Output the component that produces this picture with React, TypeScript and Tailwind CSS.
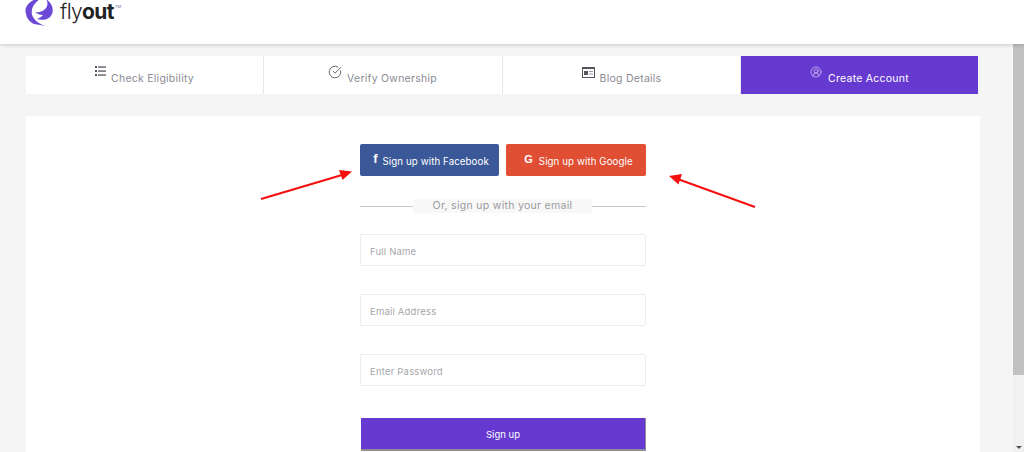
import { CircleCheckBig, CircleUserRound } from "lucide-react";

function ListIcon() {
  return (
    <svg width="11" height="10" viewBox="0 0 11 10" className="-mt-[8px] fill-[#55555c]">
      <rect x="0" y="0" width="2" height="2" />
      <rect x="3" y="0.4" width="8" height="1.3" />
      <rect x="0" y="4" width="2" height="2" />
      <rect x="3" y="4.4" width="8" height="1.3" />
      <rect x="0" y="8" width="2" height="2" />
      <rect x="3" y="8.4" width="8" height="1.3" />
    </svg>
  );
}

function BlogIcon() {
  return (
    <svg width="13" height="11" viewBox="0 0 13 11" className="-mt-[6px]">
      <rect x="0.5" y="0.5" width="12" height="10" fill="#ffffff" stroke="#55555c" />
      <rect x="0" y="0" width="13" height="2" fill="#55555c" />
      <rect x="2" y="4" width="4" height="4" fill="#55555c" />
      <rect x="7" y="4" width="4" height="1" fill="#9a9a9f" />
      <rect x="7" y="6.5" width="4" height="1" fill="#9a9a9f" />
    </svg>
  );
}

function CheckIcon() {
  return <CircleCheckBig size={14} strokeWidth={1.5} className="-mt-[7px] -ml-[1px] text-[#55555c]" />;
}

const tabs = [
  { label: "Check Eligibility", icon: <ListIcon /> },
  { label: "Verify Ownership", icon: <CheckIcon /> },
  { label: "Blog Details", icon: <BlogIcon /> },
];

const fields = ["Full Name", "Email Address", "Enter Password"];

function Logo() {
  return (
    <div className="flex items-start pl-[25px]">
      <svg width="29" height="26" viewBox="0 0 29 26" fill="#6b48d6">
        <path d="M11 -1 C3 2 -1 8 1 14 C2 19 5 22 9 24 L21 26 C14 24 9 20 7 15 C6 9 8 4 15 -1 Z" />
        <path d="M21 -1 C27 3 29 9 27 14 C25 19 19 21 12 19 C15 18 17 16 18 15 C15 15 12 14 10 12 C14 13 19 11 21 8 C23 5 23 2 21 -1 Z" />
      </svg>
      <div className="ml-[6px] flex items-start text-[#222222]">
        <span className="text-[21px] leading-[24px] font-light tracking-[-0.6px]">fly</span>
        <span className="text-[21px] leading-[24px] font-bold tracking-[-0.6px]">out</span>
        <span className="mt-[4px] ml-[1px] text-[4px] leading-[5px] text-gray-500">TM</span>
      </div>
    </div>
  );
}

function Arrows() {
  return (
    <svg width="1024" height="452" viewBox="0 0 1024 452" className="pointer-events-none absolute top-0 left-0">
      <path d="M261 199 L342 175" stroke="#f70f0f" strokeWidth="2" />
      <path d="M352 171.5 L339 170 L342.5 180 Z" fill="#f70f0f" />
      <path d="M755 207 L679 179.5" stroke="#f70f0f" strokeWidth="2" />
      <path d="M669 176 L682 174 L678.5 184.5 Z" fill="#f70f0f" />
    </svg>
  );
}

export default function App() {
  return (
    <div className="relative flex h-[452px] w-[1024px] flex-col overflow-hidden bg-[#f4f5f4] font-['Inter',sans-serif]">
      <header className="relative z-10 h-[44px] shrink-0 overflow-hidden bg-white shadow-[0_1px_4px_rgba(0,0,0,0.18)]">
        <Logo />
      </header>

      <div className="flex min-h-0 flex-1">
        <main className="flex-1 overflow-hidden pt-[12px] pl-[26px]">
          <div className="grid h-[38px] w-[952px] grid-cols-[238px_239px_238px_237px] bg-white">
            {tabs.map((tab) => (
              <div
                key={tab.label}
                className="flex items-center justify-center gap-[5px] border-r border-[#e9e9e9] text-[#8b8b94]"
              >
                {tab.icon}
                <span className="mt-[8px] text-[10.5px] tracking-[0.25px]">{tab.label}</span>
              </div>
            ))}
            <div className="flex items-center justify-center gap-[6px] bg-[#6639d0] text-white">
              <CircleUserRound size={12} strokeWidth={1.3} className="-mt-[7px] text-[#e4dcf7]" />
              <span className="mt-[8px] text-[10.5px] tracking-[0.25px]">Create Account</span>
            </div>
          </div>

          <section className="mt-[22px] flex h-[400px] w-[954px] flex-col items-center bg-white pt-[28px]">
            <div className="flex w-[286px] justify-between">
              <button className="flex h-[32px] w-[139px] items-center justify-center gap-[5px] rounded-[2px] bg-[#3b5998] pl-[3px] text-white">
                <span className="-mt-[2px] font-['Liberation_Sans',sans-serif] text-[13px] font-bold">f</span>
                <span className="mt-[5px] text-[9.7px] tracking-[0.1px]">Sign up with Facebook</span>
              </button>
              <button className="flex h-[32px] w-[140px] items-center justify-center gap-[6px] rounded-[2px] bg-[#e04e33] pl-[5px] text-white">
                <span className="-mt-[2px] font-['Liberation_Sans',sans-serif] text-[11px] font-bold">G</span>
                <span className="mt-[5px] text-[9.7px] tracking-[0.1px]">Sign up with Google</span>
              </button>
            </div>

            <div className="mt-[22px] flex h-[16px] w-[286px] items-center">
              <div className="h-px w-[53px] bg-[#c9c9cf]" />
              <div className="flex h-[14px] flex-1 items-center justify-center bg-[#f8f8f8] text-[10.5px] tracking-[0.3px] text-[#9a9a9f]">
                Or, sign up with your email
              </div>
              <div className="h-px w-[54px] bg-[#c9c9cf]" />
            </div>

            <div className="mt-[20px] flex w-[286px] flex-col gap-[28px]">
              {fields.map((field) => (
                <div
                  key={field}
                  className="flex h-[32px] items-center rounded-[2px] border border-[#ececec] bg-white pl-[9px] text-[9.5px] tracking-[0.2px] text-[#a6a6ab]"
                >
                  <span className="mt-[4px]">{field}</span>
                </div>
              ))}
            </div>

            <button className="mt-[32px] ml-[1px] h-[33px] w-[285px] border-r border-b-2 border-[#8d8d99] bg-[#6639d0] pt-[4px] text-[9.5px] text-white">
              Sign up
            </button>
          </section>
        </main>

        <div className="flex w-[11px] shrink-0 flex-col bg-[#f1f1f1]">
          <div className="h-[331px] bg-[#c1c1c1]" />
          <div className="mt-auto mb-[3px] flex justify-center">
            <div className="h-0 w-0 border-x-[3px] border-t-[3px] border-x-transparent border-t-[#505050]" />
          </div>
        </div>
      </div>

      <Arrows />
    </div>
  );
}
